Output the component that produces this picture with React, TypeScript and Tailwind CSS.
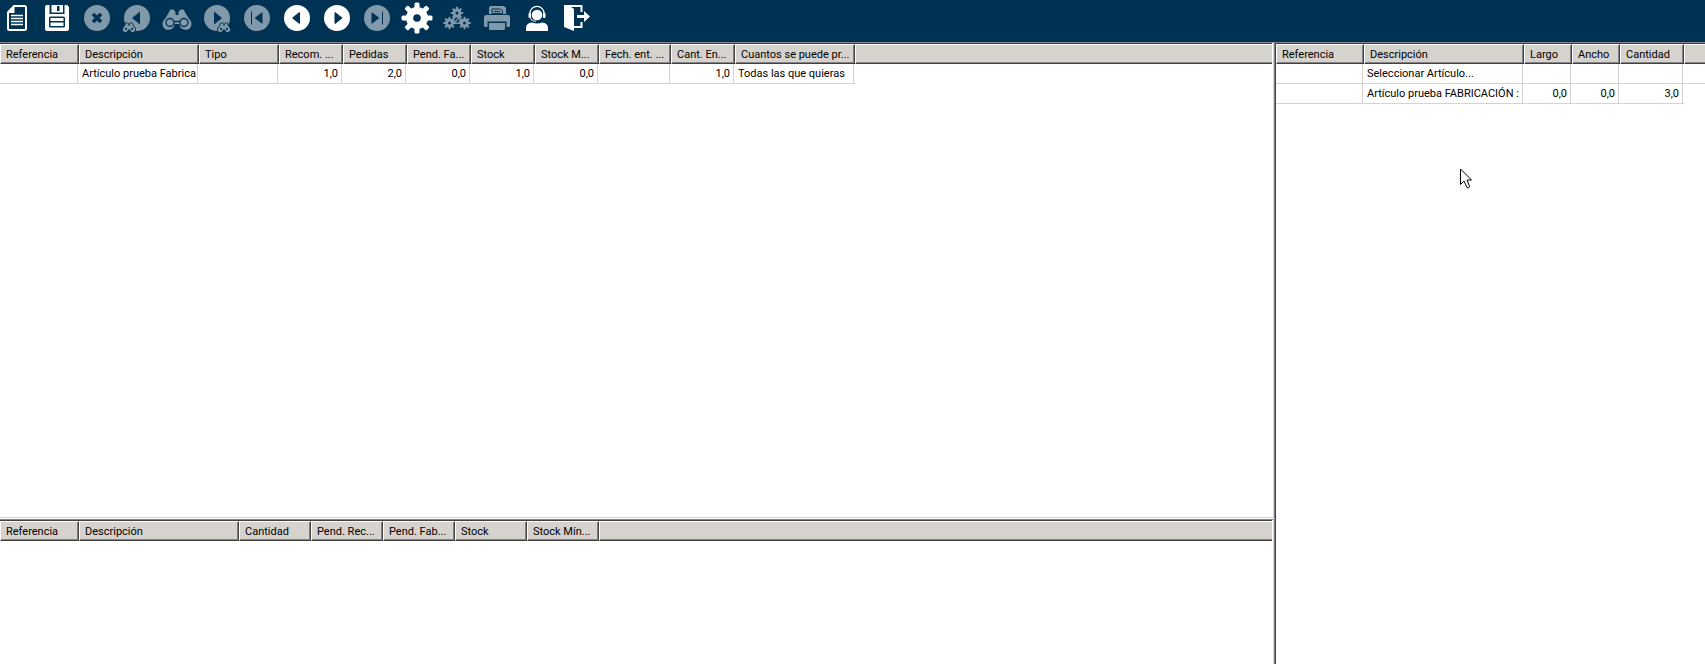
import type { ReactNode } from "react";
import clsx from "clsx";

type Column = { label: string; width: string; numeric?: boolean };

const articleColumns: Column[] = [
  { label: "Referencia", width: "w-[79px]" },
  { label: "Descripción", width: "w-[120px]" },
  { label: "Tipo", width: "w-[80px]" },
  { label: "Recom. ...", width: "w-[64px]", numeric: true },
  { label: "Pedidas", width: "w-[64px]", numeric: true },
  { label: "Pend. Fa...", width: "w-[64px]", numeric: true },
  { label: "Stock", width: "w-[64px]", numeric: true },
  { label: "Stock M...", width: "w-[64px]", numeric: true },
  { label: "Fech. ent. ...", width: "w-[72px]" },
  { label: "Cant. En...", width: "w-[64px]", numeric: true },
  { label: "Cuantos se puede pr...", width: "w-[120px]" },
];

const articleRows = [
  ["", "Artículo prueba Fabrica", "", "1,0", "2,0", "0,0", "1,0", "0,0", "", "1,0", "Todas las que quieras"],
];

const componentColumns: Column[] = [
  { label: "Referencia", width: "w-[79px]" },
  { label: "Descripción", width: "w-[160px]" },
  { label: "Cantidad", width: "w-[72px]", numeric: true },
  { label: "Pend. Rec...", width: "w-[72px]", numeric: true },
  { label: "Pend. Fab...", width: "w-[72px]", numeric: true },
  { label: "Stock", width: "w-[72px]", numeric: true },
  { label: "Stock Mín...", width: "w-[72px]", numeric: true },
];

const selectionColumns: Column[] = [
  { label: "Referencia", width: "w-[88px]" },
  { label: "Descripción", width: "w-[160px]" },
  { label: "Largo", width: "w-[48px]", numeric: true },
  { label: "Ancho", width: "w-[48px]", numeric: true },
  { label: "Cantidad", width: "w-[64px]", numeric: true },
];

const selectionRows = [
  ["", "Seleccionar Artículo...", "", "", ""],
  ["", "Artículo prueba FABRICACIÓN :", "0,0", "0,0", "3,0"],
];

const NAVY = "#003353";

const tools: { label: string; disabled?: boolean; icon: ReactNode }[] = [
  {
    label: "Nuevo",
    icon: (
      <>
        <path d="M11 2h10.500q1.500 0 1.500 1.500v21q0 1.500-1.500 1.500h-15Q5 26 5 24.500V8.500z" fill="none" stroke="currentColor" strokeWidth="2" />
        <path d="M11.500 2v7H4.500z" />
        <path d="M8 11.500h12M8 14.500h12M8 17.500h12M8 20.500h12" stroke="currentColor" strokeWidth="1.300" />
      </>
    ),
  },
  {
    label: "Guardar",
    icon: (
      <>
        <path d="M4 1h20l2 2v22q0 2-2 2H4q-2 0-2-2V3q0-2 2-2z" />
        <path d="M6.500 0h2v10h-2zM6.500 8.500h15V10h-15zM20 0h1.500v10H20z" fill={NAVY} />
        <path d="M14 2h2.500v5H14z" fill={NAVY} />
        <rect x="6" y="12.500" width="16" height="11" rx="1.500" fill={NAVY} />
        <path d="M7.500 14h13v3h-13zM7.500 18.500h13v3.500h-13z" />
      </>
    ),
  },
  {
    label: "Cancelar",
    disabled: true,
    icon: (
      <>
        <circle cx="14" cy="14" r="13" />
        <path d="M10 10l8 8M18 10l-8 8" stroke={NAVY} strokeWidth="3.600" />
      </>
    ),
  },
  {
    label: "Buscar anterior",
    disabled: true,
    icon: (
      <>
        <circle cx="14" cy="14" r="13" />
        <path d="M17 7.500v13L9 14z" fill={NAVY} />
        <Glasses x={0} y={17} size={12} outlined />
      </>
    ),
  },
  { label: "Buscar", disabled: true, icon: <Glasses x={0} y={0} size={28} /> },
  {
    label: "Buscar siguiente",
    disabled: true,
    icon: (
      <>
        <circle cx="14" cy="14" r="13" />
        <path d="M11 7.500v13l8-6.500z" fill={NAVY} />
        <Glasses x={15} y={17} size={12} outlined />
      </>
    ),
  },
  {
    label: "Primero",
    disabled: true,
    icon: (
      <>
        <circle cx="14" cy="14" r="13" />
        <path d="M19.500 8v12l-8-6zM8 7.500h1v13H8z" fill={NAVY} />
      </>
    ),
  },
  {
    label: "Anterior",
    icon: (
      <>
        <circle cx="14" cy="14" r="13" />
        <path d="M16.500 8.500v11L9.500 14z" fill={NAVY} stroke={NAVY} strokeLinejoin="round" />
      </>
    ),
  },
  {
    label: "Siguiente",
    icon: (
      <>
        <circle cx="14" cy="14" r="13" />
        <path d="M12 8.500v11l7-5.500z" fill={NAVY} stroke={NAVY} strokeLinejoin="round" />
      </>
    ),
  },
  {
    label: "Último",
    disabled: true,
    icon: (
      <>
        <circle cx="14" cy="14" r="13" />
        <path d="M8.500 8v12l8-6zM19 7.500h1v13h-1z" fill={NAVY} />
      </>
    ),
  },
  { label: "Configuración", icon: <Gear cx={14} cy={14} r={15} /> },
  {
    label: "Procesos",
    disabled: true,
    icon: (
      <>
        <Gear cx={14} cy={9} r={6} />
        <Gear cx={6.5} cy={19} r={6} />
        <Gear cx={21.5} cy={19} r={6} />
        <circle cx="14" cy="16" r="3.300" fill={NAVY} stroke="currentColor" strokeWidth="1.500" />
        <path d="M12 18l4-4" stroke="currentColor" strokeWidth="1.200" />
      </>
    ),
  },
  {
    label: "Imprimir",
    disabled: true,
    icon: (
      <>
        <path d="M8 2h13l2 2v6H6V4q0-2 2-2z" />
        <path d="M9 9.500V5h8.500l2 2v2.500z" fill="none" stroke={NAVY} />
        <path d="M11 7.500h6" stroke={NAVY} />
        <path d="M3 11h22q2 0 2 2v8.500q0 1.500-2 1.500H3q-2 0-2-1.500V13q0-2 2-2z" />
        <path d="M4.500 17.500h19V24h-19z" fill={NAVY} />
        <path d="M6 19h16v5.500q0 1.500-1.500 1.500h-13Q6 26 6 24.500z" />
      </>
    ),
  },
  {
    label: "Soporte",
    icon: (
      <>
        <circle cx="14" cy="11" r="5.300" />
        <path d="M7 11V9.500a7 7.200 0 0 1 14 0V11" fill="none" stroke="currentColor" strokeWidth="1.300" />
        <path d="M6.500 12q1.500 5 6.500 5.300" fill="none" stroke="#b9b4d6" strokeWidth="1.200" />
        <rect x="5.500" y="9" width="2.500" height="5" rx="1" />
        <rect x="20" y="9" width="2.500" height="5" rx="1" />
        <path d="M3 27v-3q0-5 6-5.500 5 2 10 0 6 .5 6 5.500v3z" />
      </>
    ),
  },
  {
    label: "Salir",
    icon: (
      <>
        <path d="M1 1h4l6 4v22l-10-4z" />
        <path d="M1 2h17.500v6M18.500 18v5H10" fill="none" stroke="currentColor" strokeWidth="2" />
        <path d="M14 11h7V7l6 5.500-6 5.500v-4h-7z" />
      </>
    ),
  },
];

export default function App() {
  return (
    <div className="flex h-screen flex-col overflow-hidden bg-white font-[Roboto,'Liberation_Sans',sans-serif] text-[11px] leading-[14px] text-black">
      <nav aria-label="Herramientas" className="flex h-[42px] shrink-0 items-start gap-3 bg-[#003353] px-[3px] pt-1">
        {tools.map((tool) => (
          <button
            key={tool.label}
            type="button"
            aria-label={tool.label}
            disabled={tool.disabled}
            className="size-7 shrink-0 text-white disabled:text-[#8099ab]"
          >
            <svg viewBox="0 0 28 28" className="size-7 overflow-visible" fill="currentColor">
              {tool.icon}
            </svg>
          </button>
        ))}
      </nav>

      <div className="flex min-h-0 flex-1">
        <div className="flex min-w-0 flex-1 flex-col">
          <Pane className="min-h-0 flex-1 border-r border-b border-r-[#d6d3ce] border-b-[#d6d3ce] pr-px">
            <Grid columns={articleColumns} rows={articleRows} />
          </Pane>
          <Pane className="mt-px h-[145px] shrink-0 border-r border-r-[#d6d3ce] pr-px">
            <Grid columns={componentColumns} rows={[]} />
          </Pane>
        </div>

        <Pane className="relative w-[431px] shrink-0 border-l border-l-[#848284]">
          <div className="h-full border-l border-[#424142]">
            <Grid columns={selectionColumns} rows={selectionRows} fullLine />
          </div>
          <Pointer />
        </Pane>
      </div>
    </div>
  );
}

function Pane({ className, children }: { className: string; children: ReactNode }) {
  return (
    <section className={clsx("overflow-hidden border-t border-t-[#848284] bg-white", className)}>
      <div className="h-full border-t border-[#424142]">{children}</div>
    </section>
  );
}

function Grid({ columns, rows, fullLine }: { columns: Column[]; rows: string[][]; fullLine?: boolean }) {
  return (
    <table className="w-full table-fixed border-separate border-spacing-0">
      <thead>
        <tr className="h-5 bg-[#d6d3ce]">
          {columns.map((col) => (
            <th
              key={col.label}
              scope="col"
              className={clsx(
                "overflow-hidden border-t border-r border-b border-l border-t-white border-r-[#424142] border-b-[#424142] border-l-white p-0 pt-0.5 pl-[5px] text-left font-normal whitespace-nowrap shadow-[inset_-1px_-1px_0_#848284]",
                col.width,
              )}
            >
              {col.label}
            </th>
          ))}
          <td className="border-t border-b border-l border-t-white border-b-[#424142] border-l-white p-0 shadow-[inset_0_-1px_0_#848284]" />
        </tr>
      </thead>
      <tbody>
        {rows.map((row, r) => (
          <tr key={r} className="h-5">
            {row.map((value, c) => (
              <td key={c} className="border-b border-[#d6d3ce] p-0 pr-px">
                <div
                  className={clsx(
                    "h-[19px] overflow-hidden border-r border-[#d6d3ce] px-[3px] pt-[3px] whitespace-nowrap",
                    columns[c].numeric && "text-right",
                  )}
                >
                  {value}
                </div>
              </td>
            ))}
            <td className={clsx("p-0", fullLine && r === 0 && "border-b border-[#d6d3ce]")} />
          </tr>
        ))}
      </tbody>
    </table>
  );
}

function Gear({ cx, cy, r }: { cx: number; cy: number; r: number }) {
  return (
    <g transform={`translate(${cx} ${cy}) scale(${r / 15})`}>
      {[0, 45, 90, 135].map((a) => (
        <rect key={a} x="-2.500" y="-15.500" width="5" height="31" rx="1.500" transform={`rotate(${a})`} />
      ))}
      <circle r="11" />
      <circle r="3.800" fill={NAVY} />
    </g>
  );
}

function Glasses({ x, y, size, outlined }: { x: number; y: number; size: number; outlined?: boolean }) {
  const body = "M7.500 5.500h3l2 2.500v3h3V8l2-2.500h3L26 15a6 6 0 1 1-9.500 5h-5A6 6 0 1 1 2 15z";
  return (
    <svg x={x} y={y} width={size} height={size} viewBox="0 0 28 28" className="overflow-visible">
      {outlined && <path d={body} fill={NAVY} stroke={NAVY} strokeWidth="4" />}
      <path d={body} />
      <g fill={outlined ? NAVY : "none"} stroke={NAVY} strokeWidth={outlined ? 0 : 1.4}>
        <circle cx="7" cy="18.500" r={outlined ? 2.5 : 4} />
        <circle cx="21" cy="18.500" r={outlined ? 2.5 : 4} />
        <path d="M11 17.500h6" />
      </g>
    </svg>
  );
}

function Pointer() {
  return (
    <svg
      aria-hidden="true"
      viewBox="0 0 12 21"
      className="pointer-events-none absolute top-[125px] left-[185px] h-[21px] w-3"
    >
      <path
        d="M.5 1v15.500l3.500-3.500 3 6.500q1 1 2 0 .8-.7.500-1.500L7 12h4.500z"
        fill="white"
        stroke="black"
      />
    </svg>
  );
}
